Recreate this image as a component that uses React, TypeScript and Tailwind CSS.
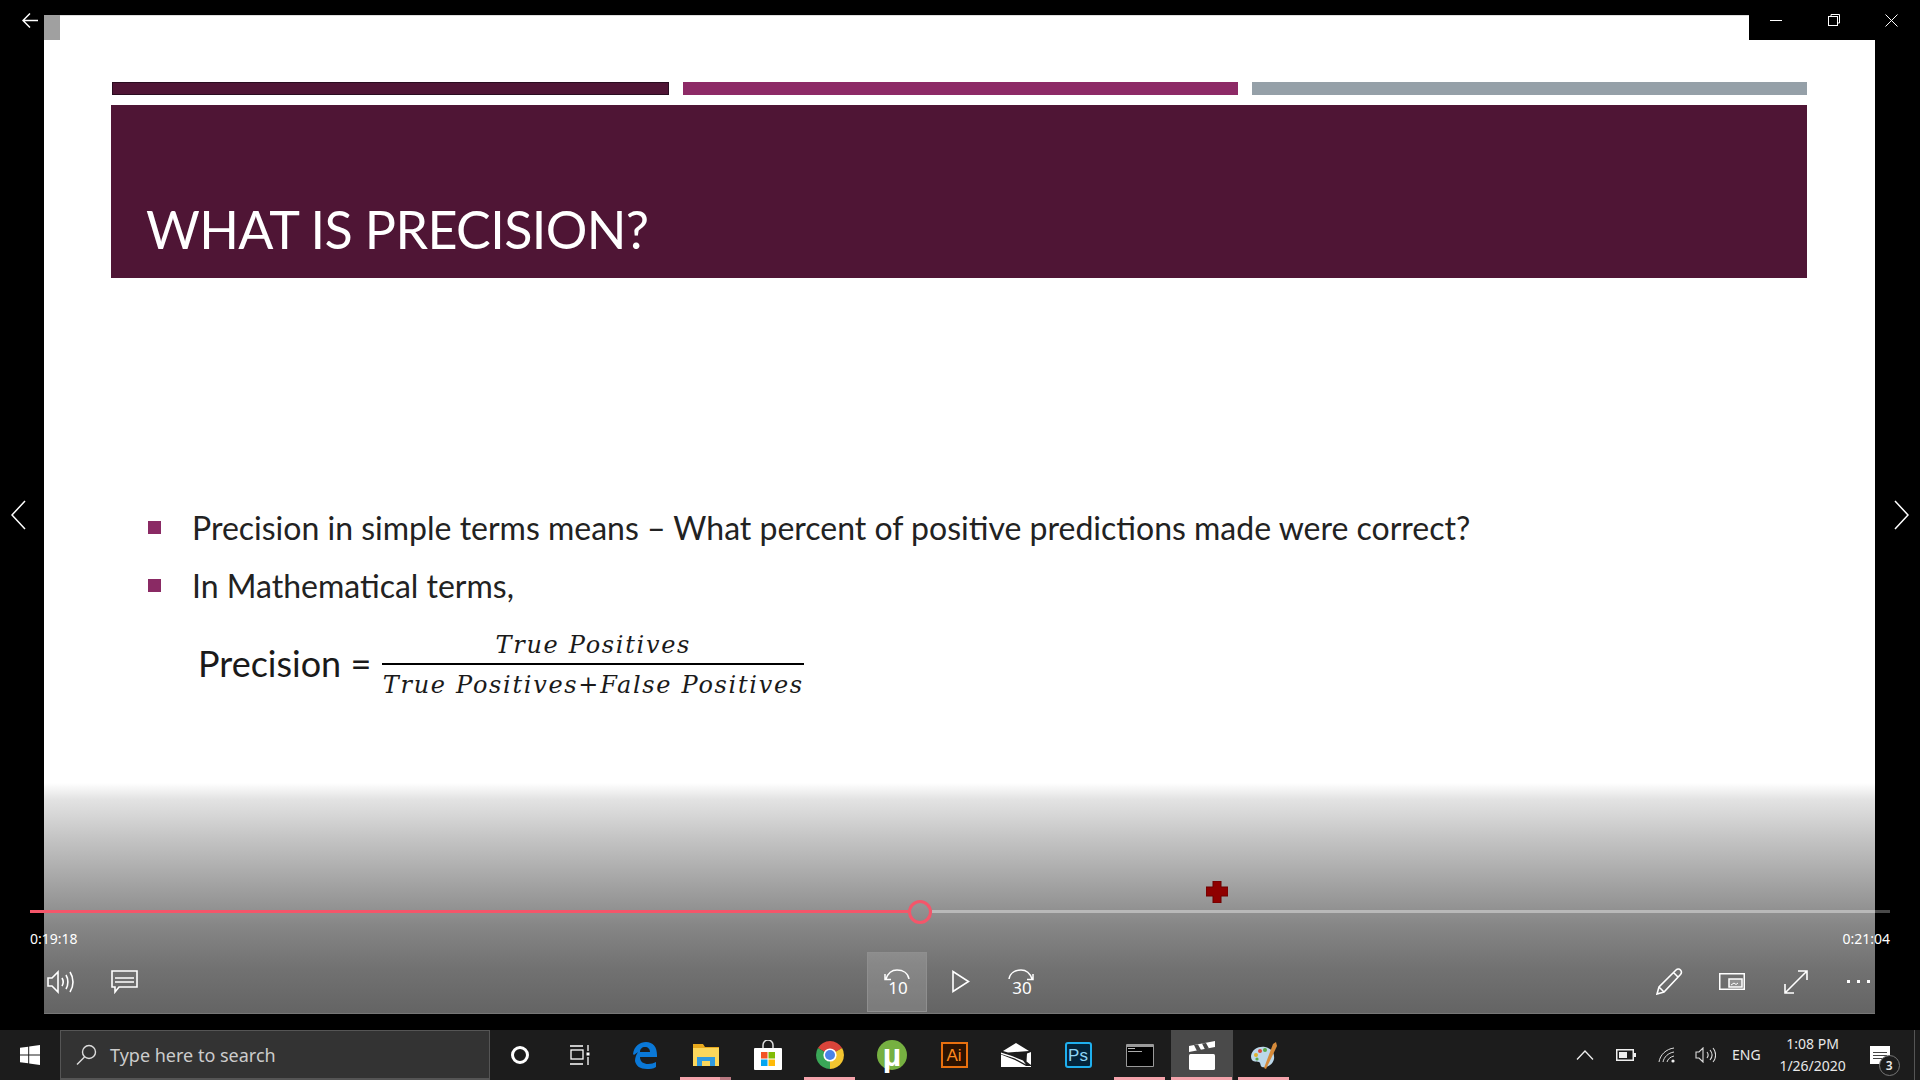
import React from "react";

const Pink = ({ w = 51 }: { w?: number }) => (
  <span className="absolute bottom-0 left-[5px] h-[3px] bg-[#f4a3ab]" style={{ width: w }} />
);

function Edge() {
  return (
    <svg width="27" height="28" viewBox="0 0 27 28">
      <path d="M2 13C3 5 9 1 15 1c7 0 11 5 11 13v2H9c0 5 4 7 8 7 3 0 6-1 8-2v5c-3 2-6 2-9 2-7 0-11-3-12-8 0-3 1-6 3-9-1 1-3 2-4 3zM9 11h10c0-3-2-5-5-5s-5 2-5 5z" fill="#0a78d7" />
    </svg>
  );
}
function Explorer() {
  return (
    <svg width="28" height="26" viewBox="0 0 28 26">
      <path d="M1 2h10l2 3h14v19H1z" fill="#e8a91c" />
      <rect x="1" y="6" width="26" height="18" fill="#fbd75c" />
      <rect x="5" y="15" width="18" height="9" fill="#2f9ae0" />
      <rect x="10" y="19" width="8" height="5" fill="#fbd75c" />
    </svg>
  );
}
function Store() {
  return (
    <svg width="30" height="30" viewBox="0 0 30 30">
      <path d="M10 8V5a5 5 0 0 1 10 0v3" fill="none" stroke="#ddd" strokeWidth="1.5" />
      <rect x="1" y="8" width="28" height="22" rx="1" fill="#fff" />
      <rect x="8" y="12" width="6.5" height="6.5" fill="#f35325" />
      <rect x="15.5" y="12" width="6.5" height="6.5" fill="#81bc06" />
      <rect x="8" y="19.5" width="6.5" height="6.5" fill="#05a6f0" />
      <rect x="15.5" y="19.5" width="6.5" height="6.5" fill="#ffba08" />
    </svg>
  );
}
function Chrome() {
  return (
    <svg width="28" height="28" viewBox="0 0 28 28">
      <path d="M14 14 L26.1 7 A14 14 0 0 0 1.9 7 Z" fill="#d9443a" />
      <path d="M14 14 L1.9 7 A14 14 0 0 0 14 28 Z" fill="#3aa757" />
      <path d="M14 14 L14 28 A14 14 0 0 0 26.1 7 Z" fill="#f3c530" />
      <circle cx="14" cy="14" r="6.6" fill="#fff" />
      <circle cx="14" cy="14" r="5" fill="#4a83e8" />
    </svg>
  );
}
function Mail() {
  return (
    <svg width="30" height="24" viewBox="0 0 30 24">
      <path d="M2 8 15 0l13 8-21 1.500z" fill="#fff" />
      <path d="M0 9.500 11 13l11 4.500 3 4-11-6L0 11zM30 9l-4 1.500-.5 8L30 22z" fill="#fff" />
      <path d="M0 11.500 14 17l11 6h5v1H0z" fill="#fff" />
    </svg>
  );
}
function Terminal() {
  return (
    <div className="flex h-[23px] w-[28px] flex-col rounded-[1px] border border-t-[3px] border-[#9a9a9a] bg-black">
      <span className="mt-[1px] ml-[1px] h-[1px] w-[7px] bg-[#bbb]" />
      <span className="mt-[2px] ml-[1px] h-[1px] w-[14px] bg-[#aaa]" />
    </div>
  );
}
function Clapper() {
  return (
    <svg width="28" height="29" viewBox="0 0 28 29">
      <path d="M1 5 27 0v6L1 11z" fill="#fff" />
      <path d="M6 4.100 9 10l4-1-3-5.600zM14 2.600 17 8.500l4-1-3-5.600z" fill="#4a4a4a" />
      <rect x="1" y="13" width="26" height="16" rx="1.5" fill="#fff" />
    </svg>
  );
}
function Palette() {
  return (
    <svg width="30" height="29" viewBox="0 0 30 29">
      <path d="M2 15C3 8 10 5 16 6c6 1 10 6 9 12-1 6-8 9-12 8-2-1-1-4-3-5-3-1-8 1-8-6z" fill="#bcd8ea" />
      <circle cx="7" cy="14" r="2" fill="#e0b02c" />
      <circle cx="11" cy="10" r="2" fill="#d9483c" />
      <circle cx="8" cy="18" r="1.6" fill="#5aa846" />
      <circle cx="16" cy="9" r="2" fill="#5aa846" />
      <path d="M27 1 24 3 15 27l2 1L28 5z" fill="#d58a3a" />
    </svg>
  );
}

function TaskIcon({ children, pink, active, double }: { children: React.ReactNode; pink?: boolean; active?: boolean; double?: boolean }) {
  return (
    <div className={`relative flex h-[50px] w-[62px] shrink-0 items-center justify-center ${active ? "bg-[#4a4a4a]" : ""}`}>
      {children}
      {pink && <Pink w={51} />}
      {double && <span className="absolute bottom-0 left-[45px] h-[3px] w-[11px] bg-[#b87880]" />}
      {active && <span className="absolute bottom-0 left-0 h-[3px] w-[61px] bg-[#f4a3ab]" />}
    </div>
  );
}

function Taskbar() {
  return (
    <div className="flex h-[50px] w-full shrink-0 items-center bg-[#1c1c1c] text-white" style={{ fontFamily: '"Noto Sans", sans-serif' }}>
      <div className="flex h-full w-[60px] shrink-0 items-center justify-center">
        <svg width="20" height="20" viewBox="0 0 20 20" fill="#fff">
          <path d="M0 2.800 8.200 1.700v7.800H0zM9.200 1.500 20 0v9.500H9.200zM0 10.500h8.200v7.800L0 17.200zM9.200 10.500H20V20L9.200 18.500z" />
        </svg>
      </div>
      <div className="-mr-[1px] flex h-full w-[430px] shrink-0 items-center border border-b-2 border-[#555] bg-[#333] pl-[15px]">
        <svg width="21" height="21" viewBox="0 0 21 21" fill="none" stroke="#ddd" strokeWidth="1.4">
          <circle cx="13" cy="8" r="6.5" />
          <path d="M8.500 13 1 20.500" />
        </svg>
        <span className="ml-[13px] text-[18px] leading-none text-[#ccc]">Type here to search</span>
      </div>
      <TaskIcon>
        <span className="block h-[18px] w-[18px] rounded-full border-[3px] border-white" />
      </TaskIcon>
      <TaskIcon>
        <svg className="-translate-x-[2px]" width="20" height="20" viewBox="0 0 20 20" fill="none" stroke="#fff" strokeWidth="1.3">
          <path d="M0 1h13M0 19h13" />
          <rect x="1" y="5" width="12" height="9" />
          <path d="M18 0v6M18 12v8" />
          <rect x="16.5" y="7.5" width="3" height="3" fill="#fff" stroke="none" />
        </svg>
      </TaskIcon>
      <TaskIcon><Edge /></TaskIcon>
      <TaskIcon pink double><Explorer /></TaskIcon>
      <TaskIcon><Store /></TaskIcon>
      <TaskIcon pink><Chrome /></TaskIcon>
      <TaskIcon>
        <span className="flex h-[30px] w-[30px] items-center justify-center rounded-full bg-[#76b041] text-[32px] leading-none font-bold text-white" style={{ fontFamily: '"Liberation Sans", sans-serif' }}>µ</span>
      </TaskIcon>
      <TaskIcon>
        <span className="flex h-[26px] w-[27px] items-center justify-center border-2 border-[#e8700f] bg-[#2b1200] text-[17px] leading-none text-[#ff8a1e]" style={{ fontFamily: '"Liberation Sans", sans-serif' }}>Ai</span>
      </TaskIcon>
      <TaskIcon><Mail /></TaskIcon>
      <TaskIcon>
        <span className="flex h-[26px] w-[27px] items-center justify-center rounded-[3px] border-2 border-[#1fb0ef] bg-[#03243a] text-[17px] leading-none text-[#8ed6f7]" style={{ fontFamily: '"Liberation Sans", sans-serif' }}>Ps</span>
      </TaskIcon>
      <TaskIcon pink><Terminal /></TaskIcon>
      <TaskIcon active><Clapper /></TaskIcon>
      <TaskIcon pink><Palette /></TaskIcon>

      <div className="relative ml-auto h-full w-[390px] shrink-0 text-[#e8e8e8]">
        <div className="flex h-full items-center">
          <div className="flex w-[66px] shrink-0 justify-end pr-[2px]">
            <svg width="18" height="10" viewBox="0 0 18 10" fill="none" stroke="#eee" strokeWidth="1.3"><path d="M1 9.500 9 1l8 8.500" /></svg>
          </div>
          <div className="ml-[20px] shrink-0">
            <svg width="20" height="12" viewBox="0 0 20 12" fill="none"><rect x=".75" y=".75" width="16.5" height="10.5" stroke="#eee" strokeWidth="1.5" /><rect x="3" y="3" width="8" height="6" fill="#eee" /><rect x="18" y="4" width="2" height="4" fill="#eee" /></svg>
          </div>
          <div className="ml-[22px] shrink-0">
            <svg width="18" height="16" viewBox="0 0 18 16" fill="none" stroke="#ddd" strokeWidth="1"><path d="M1 15C2 8 8 2 16 1M5 15c1-5 5-9 11-10M9 15c1-3 3-5 7-6" /><circle cx="15" cy="14" r="1.6" fill="#eee" stroke="none" /></svg>
          </div>
          <div className="ml-[19px] shrink-0">
            <svg width="21" height="16" viewBox="0 0 21 16" fill="none" stroke="#ddd" strokeWidth="1.1"><path d="M1 5h3l4-4v14l-4-4H1zM12 5c1.500 2 1.500 4 0 6M15 3c2.500 3 2.500 7 0 10M18 1c3.500 4 3.500 10 0 14" /></svg>
          </div>
          <span className="ml-[16px] shrink-0 text-[14px] leading-none">ENG</span>
          <div className="ml-[17px] flex w-[70px] shrink-0 flex-col items-center text-[14px] leading-[22px]">
            <span>1:08 PM</span>
            <span>1/26/2020</span>
          </div>
          <div className="relative ml-[22px] shrink-0">
            <div className="flex h-[18px] w-[20px] flex-col justify-center gap-[2px] bg-white px-[3px]">
              <span className="h-[1px] bg-[#444]" />
              <span className="h-[1px] bg-[#444]" />
              <span className="h-[1px] bg-[#444]" />
            </div>
            <span className="absolute left-[9px] top-[9px] flex h-[21px] w-[21px] items-center justify-center rounded-full border border-[#777] bg-[#1c1c1c] text-[12px] leading-none font-semibold">3</span>
          </div>
        </div>
        <span className="absolute right-[5px] top-0 h-full w-px bg-[#555]" />
      </div>
    </div>
  );
}

function TransportIcon({ label, forward }: { label: string; forward?: boolean }) {
  return (
    <svg width="30" height="36" viewBox="0 -3 30 36" fill="none" stroke="#fff" strokeWidth="1.5">
      {forward ? (
        <path d="M3 12C4 6 9 3 15 3c5 0 9 3 11 9M27 7v5.500h-6" />
      ) : (
        <path d="M27 12C26 6 21 3 15 3 10 3 6 6 4 12M3 7v5.500h6" />
      )}
      <text x="16" y="27" textAnchor="middle" fontSize="17" fill="#fff" stroke="none" style={{ fontFamily: '"Noto Sans", sans-serif' }}>{label}</text>
    </svg>
  );
}

function Controls() {
  return (
    <div className="absolute inset-x-0 bottom-0 h-[231px] border-b border-[#777] bg-[linear-gradient(to_bottom,rgba(255,255,255,0)_0%,#e3e3e3_7%,#c4c4c4_24%,#a6a6a6_42%,#868686_62%,#727272_80%,#646464_100%)]">
      <div className="absolute inset-x-0 bottom-0 flex h-[63px] items-center text-white">
        <svg className="ml-[3px]" width="27" height="24" viewBox="0 0 27 24" fill="none" stroke="#fff" strokeWidth="1.6">
          <path d="M1 8h4l6-6v20l-6-6H1zM15 8c1.500 2.500 1.500 5.500 0 8M19 5c2.500 4 2.500 10 0 14M23 2c4 6 4 14 0 20" />
        </svg>
        <svg className="ml-[37px]" width="27" height="24" viewBox="0 0 27 24" fill="none" stroke="#fff" strokeWidth="1.6">
          <path d="M1 1h25v16H8l-4 5v-5H1zM4 8h19M4 12h19" />
        </svg>
        <div className="ml-[729px] flex h-[60px] w-[60px] items-center justify-center border border-[#8f8f8f] bg-white/15">
          <TransportIcon label="10" />
        </div>
        <div className="ml-[25px]">
          <svg width="18" height="23" viewBox="0 0 18 23" fill="none" stroke="#fff" strokeWidth="1.6"><path d="M1 1.500v20L16.500 11.500z" /></svg>
        </div>
        <div className="ml-[36px]">
          <TransportIcon label="30" forward />
        </div>
        <div className="ml-auto flex items-center pr-[3px]">
          <svg width="27" height="27" viewBox="0 0 27 27" fill="none" stroke="#fff" strokeWidth="1.6">
            <path d="M1 26l2-7L20 2c1.500-1.500 3.500-1 4.500 0s1.500 3 0 4.500L8 24zM3 19l5 5M17.500 4.500l5 5" />
          </svg>
          <svg className="ml-[36px]" width="26" height="17" viewBox="0 0 26 17" fill="none" stroke="#fff" strokeWidth="1.5">
            <rect x=".75" y=".75" width="24.500" height="15.500" />
            <rect x="10" y="6" width="13" height="8" fill="rgba(255,255,255,.25)" />
            <path d="M12 12l3-2 2 1.500 2-1.500" strokeWidth="1" />
          </svg>
          <svg className="ml-[39px]" width="24" height="24" viewBox="0 0 24 24" fill="none" stroke="#fff" strokeWidth="1.6">
            <path d="M14 1h9v9M23 1 1 23M1 14v9h9" />
          </svg>
          <div className="ml-[39px] flex items-center gap-[7px] pr-[2px]">
            <span className="h-[3px] w-[3px] bg-white" />
            <span className="h-[3px] w-[3px] bg-white" />
            <span className="h-[3px] w-[3px] bg-white" />
          </div>
        </div>
      </div>
    </div>
  );
}

function Slide() {
  const bodyFont = { fontFamily: "Lato, sans-serif" };
  return (
    <div className="relative h-full overflow-hidden bg-white pt-[67px] pr-[68px] pl-[67px]" style={bodyFont}>
      <div className="flex gap-[13.5px] pl-[1px]">
        <div className="h-[13px] flex-1 border border-[#2a0c20] bg-[#4f1535]" />
        <div className="h-[13px] flex-1 bg-[#8d2a66]" />
        <div className="h-[13px] flex-1 bg-[#95a0a8]" />
      </div>
      <div className="mt-[10px] flex h-[173px] items-end bg-[#4f1535] pb-[23px] pl-[35px]">
        <h1 className="text-[52px] leading-none font-normal tracking-[-0.6px] text-white">WHAT IS PRECISION?</h1>
      </div>
      <ul className="mt-[231px] flex flex-col gap-[21px] pl-[37px] text-[32px] leading-[37px] text-[#222]">
        <li className="flex items-center">
          <span className="h-[13px] w-[13px] bg-[#8a2a64]" />
          <span className="ml-[31px]">Precision in simple terms means – What percent of positive predictions made were correct?</span>
        </li>
        <li className="flex items-center">
          <span className="h-[13px] w-[13px] bg-[#8a2a64]" />
          <span className="ml-[31px]">In Mathematical terms,</span>
        </li>
      </ul>
      <div className="mt-[26px] flex items-center pl-[87px] text-[36px] leading-none text-[#1a1a1a]">
        <span className="pb-[5px]">Precision =</span>
        <div className="ml-[11px] flex w-[422px] flex-col items-center italic tracking-[1.7px]" style={{ fontFamily: '"DejaVu Serif", "Liberation Serif", serif' }}>
          <span className="pb-[3px] text-[24px] leading-[30px]">True Positives</span>
          <span className="h-[2px] w-full bg-black" />
          <span className="pt-[5px] text-[24px] leading-[30px]">True Positives+False Positives</span>
        </div>
      </div>
      <Controls />
      <div className="absolute inset-x-0 top-0 h-px bg-[#ddd]" />
      <div className="absolute top-0 left-0 h-[25px] w-[16px] bg-[#a0a0a0]" />
      <div className="absolute top-0 right-0 h-[25px] w-[126px] bg-black" />
    </div>
  );
}

export default function App() {
  return (
    <div className="relative flex h-[1080px] w-[1920px] flex-col overflow-hidden bg-black" style={{ fontFamily: '"Noto Sans", sans-serif' }}>
      <div className="h-[1030px] shrink-0 pt-[15px] pr-[45px] pb-[16px] pl-[44px]">
        <Slide />
      </div>
      <Taskbar />

      {/* title bar overlay */}
      <div className="absolute inset-x-0 top-0 flex h-[40px] items-center pl-[22px]">
        <svg width="16" height="15" viewBox="0 0 16 15" fill="none" stroke="#fff" strokeWidth="1.5"><path d="M8 .5 1 7.500l7 7M1 7.500h15" /></svg>
        <div className="ml-auto flex items-center pr-[22px]">
          <span className="h-px w-[12px] bg-white" />
          <svg className="ml-[46px]" width="12" height="12" viewBox="0 0 12 12" fill="none" stroke="#fff"><rect x=".5" y="2.500" width="9" height="9" /><path d="M3 2.500V.5h8.500V9H9.500" /></svg>
          <svg className="ml-[45px]" width="13" height="13" viewBox="0 0 13 13" fill="none" stroke="#fff"><path d="M.5.5l12 12M12.500.5l-12 12" /></svg>
        </div>
      </div>

      {/* side arrows */}
      <svg className="absolute left-[11px] top-[500px]" width="15" height="30" viewBox="0 0 15 30" fill="none" stroke="#fff" strokeWidth="1.5"><path d="M14 1 1 15l13 14" /></svg>
      <svg className="absolute right-[11px] top-[500px]" width="15" height="30" viewBox="0 0 15 30" fill="none" stroke="#fff" strokeWidth="1.5"><path d="M1 1l13 14L1 29" /></svg>

      {/* seek bar overlay */}
      <div className="absolute left-[30px] top-[910px] flex h-[3px] w-[1860px] items-center">
        <div className="h-[3px] w-[878px] bg-[#f4566a]" />
        <div className="relative h-[24px] w-[24px] shrink-0 rounded-full border-[3px] border-[#f4566a]" />
        <div className="h-[3px] flex-1 bg-[#b9b9b9]" />
      </div>
      <span className="absolute left-[1875px] top-[910px] h-[3px] w-[15px] bg-[#4a4a4a]" />
      <div className="absolute left-[30px] top-[929px] flex w-[1860px] justify-between text-[14px] leading-[20px] text-white">
        <span>0:19:18</span>
        <span>0:21:04</span>
      </div>
      <svg className="absolute left-[1206px] top-[881px]" width="22" height="22" viewBox="0 0 22 22">
        <path d="M7 0h8v6h7v9h-7v7H7v-7H0V6h7z" fill="#8f0000" stroke="#6a0000" />
      </svg>
    </div>
  );
}
